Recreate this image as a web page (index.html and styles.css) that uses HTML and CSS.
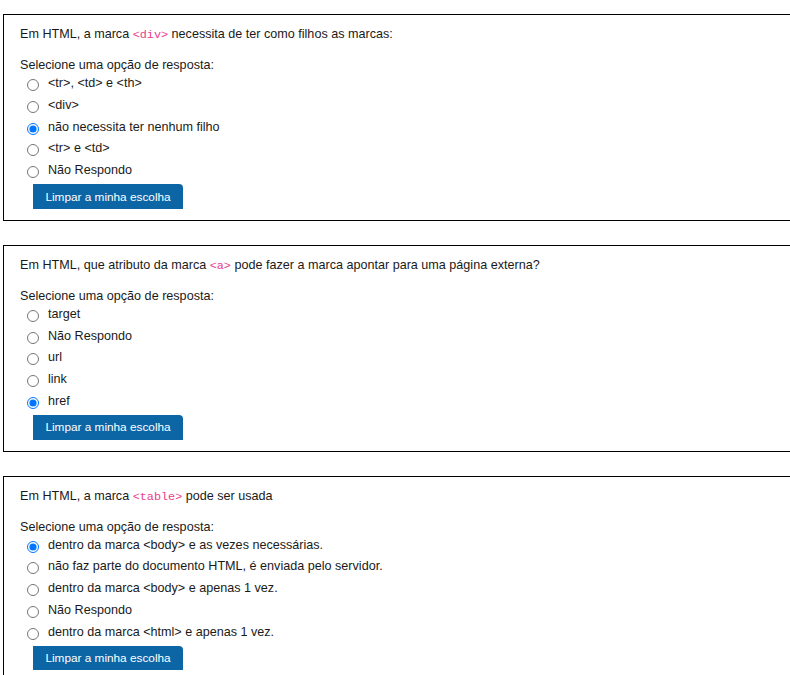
FILE: index.html
```html
<!DOCTYPE html>
<html lang="pt">
<head>
<meta charset="utf-8">
<title>Questionário HTML</title>
<link rel="stylesheet" href="styles.css">
</head>
<body>
<div class="card">
  <p class="qtext">Em HTML, a marca <code>&lt;div&gt;</code> necessita de ter como filhos as marcas:</p>
  <p class="prompt">Selecione uma opção de resposta:</p>
  <div class="answers">
    <label class="opt"><input type="radio" name="q1"><span>&lt;tr&gt;, &lt;td&gt; e &lt;th&gt;</span></label>
    <label class="opt"><input type="radio" name="q1"><span>&lt;div&gt;</span></label>
    <label class="opt"><input type="radio" name="q1" checked><span>não necessita ter nenhum filho</span></label>
    <label class="opt"><input type="radio" name="q1"><span>&lt;tr&gt; e &lt;td&gt;</span></label>
    <label class="opt"><input type="radio" name="q1"><span>Não Respondo</span></label>
  </div>
  <button class="clear" type="button">Limpar a minha escolha</button>
</div>

<div class="card">
  <p class="qtext">Em HTML, que atributo da marca <code>&lt;a&gt;</code> pode fazer a marca apontar para uma página externa?</p>
  <p class="prompt">Selecione uma opção de resposta:</p>
  <div class="answers">
    <label class="opt"><input type="radio" name="q2"><span>target</span></label>
    <label class="opt"><input type="radio" name="q2"><span>Não Respondo</span></label>
    <label class="opt"><input type="radio" name="q2"><span>url</span></label>
    <label class="opt"><input type="radio" name="q2"><span>link</span></label>
    <label class="opt"><input type="radio" name="q2" checked><span>href</span></label>
  </div>
  <button class="clear" type="button">Limpar a minha escolha</button>
</div>

<div class="card">
  <p class="qtext">Em HTML, a marca <code>&lt;table&gt;</code> pode ser usada</p>
  <p class="prompt">Selecione uma opção de resposta:</p>
  <div class="answers">
    <label class="opt"><input type="radio" name="q3" checked><span>dentro da marca &lt;body&gt; e as vezes necessárias.</span></label>
    <label class="opt"><input type="radio" name="q3"><span>não faz parte do documento HTML, é enviada pelo servidor.</span></label>
    <label class="opt"><input type="radio" name="q3"><span>dentro da marca &lt;body&gt; e apenas 1 vez.</span></label>
    <label class="opt"><input type="radio" name="q3"><span>Não Respondo</span></label>
    <label class="opt"><input type="radio" name="q3"><span>dentro da marca &lt;html&gt; e apenas 1 vez.</span></label>
  </div>
  <button class="clear" type="button">Limpar a minha escolha</button>
</div>
</body>
</html>
```

FILE: styles.css
```css
html {
  overflow: hidden;
}

body {
  margin: 0;
  padding-top: 14px;
  background: #ffffff;
  color: #1a1a1a;
  font-family: "Liberation Sans", Arial, sans-serif;
  font-size: 12.6px;
}

.card {
  width: 820px;
  margin: 0 0 24px 3px;
  padding: 10px 16px 11px 16px;
  border: 1px solid #000000;
  box-sizing: border-box;
}

.qtext {
  margin: 0;
  line-height: 18px;
}

.qtext code {
  font-family: "Liberation Mono", "DejaVu Sans Mono", monospace;
  font-size: 11.8px;
  color: #e83e8c;
}

.prompt {
  margin: 14px 0 0 0;
  line-height: 15px;
}

.answers {
  display: flex;
  flex-direction: column;
}

.opt {
  display: block;
  height: 21.75px;
  line-height: 21.75px;
  white-space: nowrap;
}

.opt input {
  width: 12px;
  height: 12px;
  margin: 0 9px 0 7px;
  vertical-align: -4px;
}

.clear {
  display: block;
  margin: 2.5px 0 0 13px;
  height: 24.5px;
  width: 150px;
  padding: 0;
  border: none;
  border-radius: 0 4px 0 0;
  background: #0c66a6;
  color: #ffffff;
  font-family: "Liberation Sans", Arial, sans-serif;
  font-size: 11.8px;
  text-align: center;
}
```
